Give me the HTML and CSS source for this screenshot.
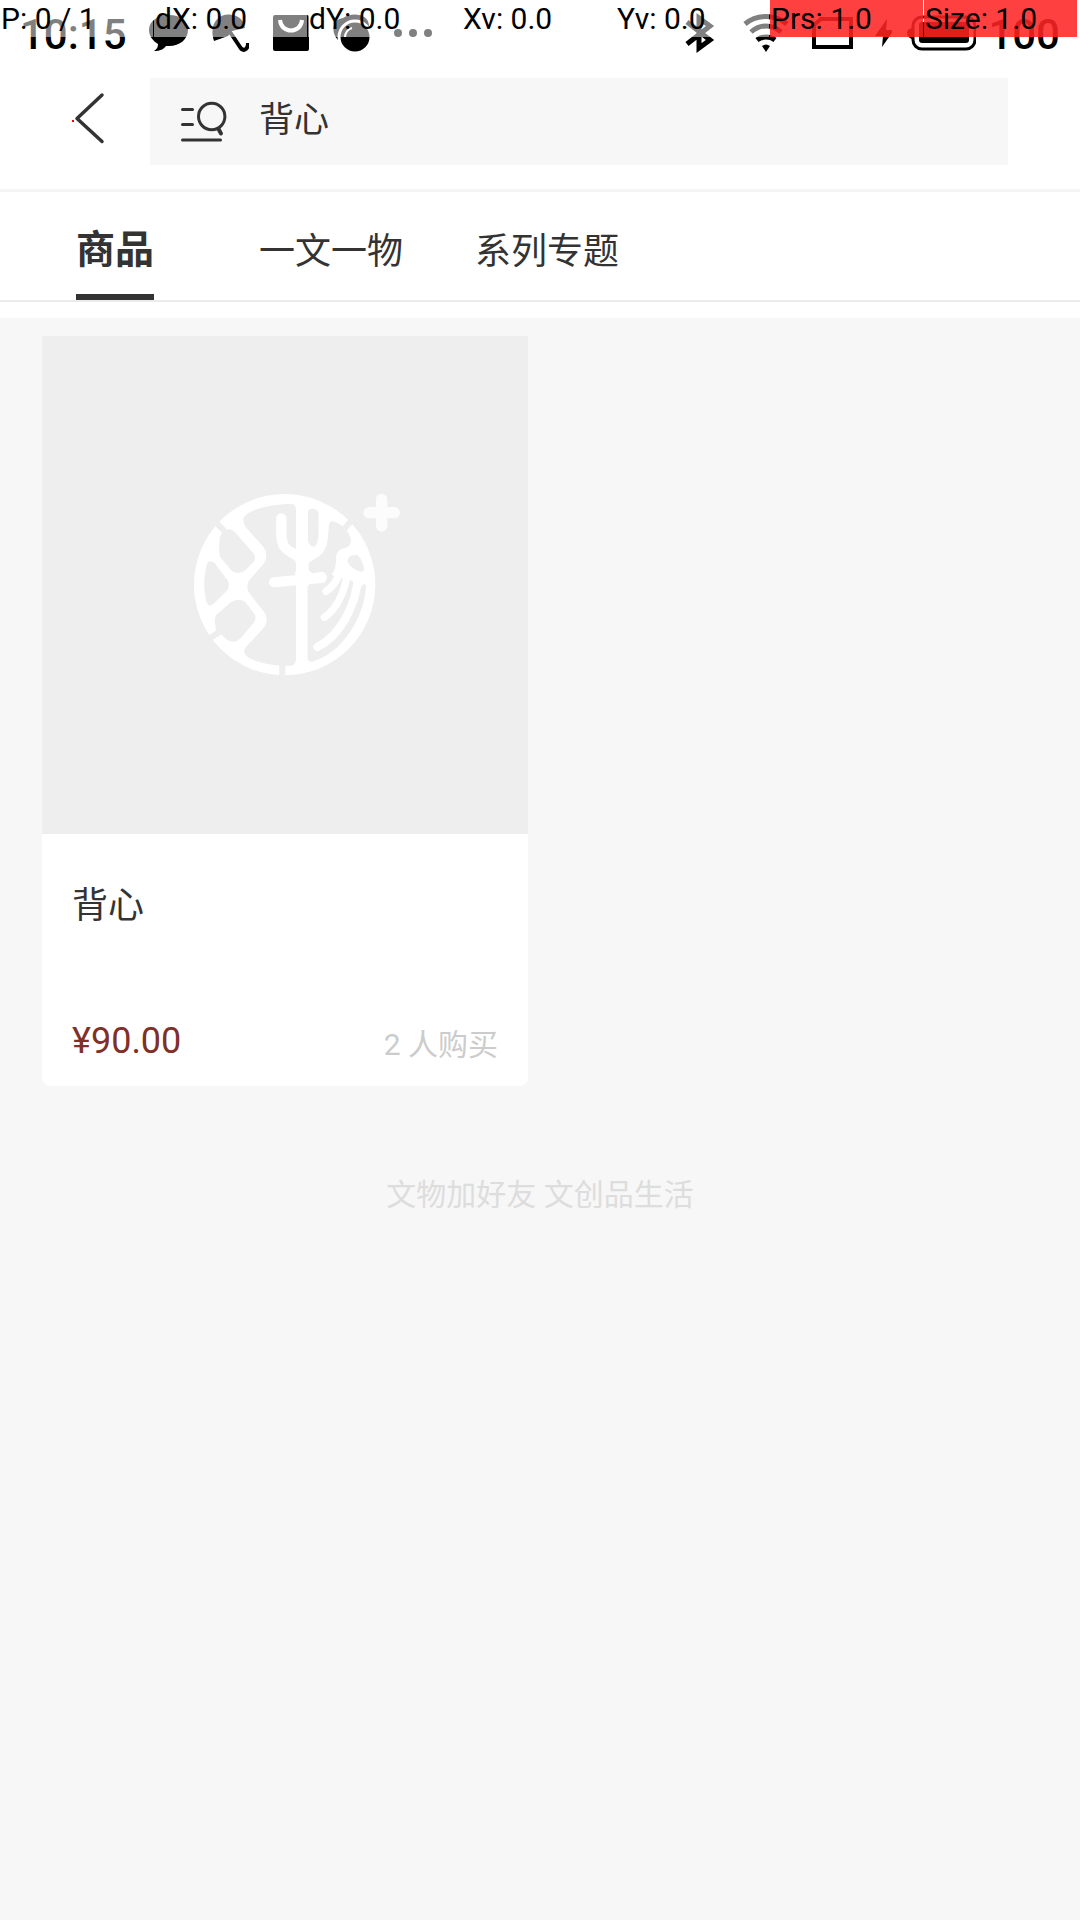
FILE: index.html
```html
<!DOCTYPE html>
<html lang="zh-CN">
<head>
<meta charset="utf-8">
<meta name="viewport" content="width=device-width, initial-scale=1">
<title>背心</title>
<link rel="stylesheet" href="styles.css">
</head>
<body>
<div class="status-bar">
  <div class="status-group">
    <span class="status-text">10:15</span>
    <svg width="40" height="40" viewBox="148 13 40 40"><path d="M169 15c11 0 19 6 19 15s-8 16-19 16h-3c-2 3-6 5-12 5 3-2 4-4 4-7-5-3-9-8-9-14 0-9 9-15 20-15z"/></svg>
    <svg width="40" height="40" viewBox="209 13 40 40"><path d="M214 41c-6-18 6-29 18-26 7 1 12 5 13 13l-13 3-4 5z"/><path d="M230 32l10 15c3 5 8 3 8-4" fill="none" stroke="#000" stroke-width="4"/></svg>
    <svg width="40" height="40" viewBox="270 13 40 40"><rect x="273" y="15" width="36" height="36" rx="2"/><path d="M280 20c1 14 21 14 22 0" fill="none" stroke="#fff" stroke-width="4"/></svg>
    <svg width="40" height="40" viewBox="331 13 40 40"><path d="M338 40c-8-8-5-21 5-22 8-6 26-5 26 8z"/><circle cx="355" cy="37" r="16" stroke="#fff" stroke-width="3"/><path d="M345 37c0-4 3-8 7-9" fill="none" stroke="#fff" stroke-width="2"/></svg>
    <svg width="40" height="40" viewBox="392 13 40 40"><circle cx="398" cy="33" r="4"/><circle cx="413" cy="33" r="4"/><circle cx="428" cy="33" r="4"/></svg>
  </div>
  <div class="status-group status-right">
    <svg width="40" height="40" viewBox="684 13 40 40"><path d="M687 22l23 18-11 8V18l11 8-23 18" fill="none" stroke="#000" stroke-width="5"/></svg>
    <svg width="60" height="40" viewBox="736 13 60 40"><path d="M745 24c12-10 30-10 42 0M751 32c9-8 21-8 30 0M757 40c5-4 13-4 18 0" fill="none" stroke="#000" stroke-width="5"/><path d="M762 46q4-3 8 0l-4 6z"/></svg>
    <svg width="48" height="40" viewBox="808 13 48 40"><path d="M814 25l7-6h30v28h-37z" fill="none" stroke="#000" stroke-width="4"/></svg>
    <svg width="24" height="40" viewBox="868 13 24 40"><path d="M887 19l-12 17h8l-1 11 12-17h-8z"/></svg>
    <svg width="72" height="40" viewBox="904 13 72 40"><rect x="913" y="17" width="62" height="32" rx="9" fill="none" stroke="#000" stroke-width="3"/><path d="M912 28q-5 1-5 5t5 6z"/><rect x="919" y="22" width="50" height="21" rx="3"/></svg>
    <span class="status-text">100</span>
  </div>
  <div class="pointer-bar">
    <span>P: 0 / 1</span><span>dX: 0.0</span><span>dY: 0.0</span><span>Xv: 0.0</span><span>Yv: 0.0</span><span class="hot">Prs: 1.0</span><span class="hot">Size: 1.0</span>
  </div>
</div>
<header class="header">
  <button class="back" type="button" aria-label="返回">
    <svg width="32" height="52" viewBox="74 92 32 52"><path d="M102 95L77 118.500l25 23" fill="none" stroke="#333" stroke-width="3.500" stroke-linecap="round" stroke-linejoin="round"/></svg>
    <i class="touch-dot"></i>
  </button>
  <label class="search">
    <svg width="48" height="42" viewBox="180 100 48 42" fill="none" stroke="#333" stroke-width="3" stroke-linecap="round"><path d="M182.500 108.500H192.500M182.500 123.500H192.500M182.500 139H220.500"/><circle cx="211.700" cy="115.500" r="13.200"/><path d="M218.500 128l2.500 4.500" stroke-width="4"/></svg>
    <input type="text" value="背心" aria-label="搜索">
  </label>
</header>
<nav class="tabs">
  <a class="tab active" href="#goods"><span>商品</span></a>
  <a class="tab" href="#articles"><span>一文一物</span></a>
  <a class="tab" href="#series"><span>系列专题</span></a>
</nav>
<main class="results">
  <article class="card">
    <div class="cover">
      <svg width="250" height="210" viewBox="-60 0 750 630">
        <circle cx="314" cy="314" r="272" fill="#fff"/>
        <g fill="#eee">
          <path d="M190 115C200 90 270 72 335 72Q348 74 348 90V540Q346 558 330 557L298 557C250 552 210 540 196 525Q186 510 203 495L250 445Q269 420 252 395L208 340Q196 320 208 300L250 253Q268 225 250 200L200 145Q188 130 190 115Z"/>
          <path d="M120 170Q128 150 150 148Q164 152 170 162L220 220Q231 234 220 247L196 271Q177 286 156 274L120 230Q114 212 120 170Z"/>
          <path d="M82 248Q93 238 104 250L142 300Q151 315 142 330L102 370Q88 384 80 368C70 330 70 285 82 248Z"/>
          <path d="M104 423Q104 404 120 395L152 367Q175 352 195 365L222 400Q232 415 220 430L182 475Q163 493 142 480L126 466L108 451Z"/>
          <path d="M384 96Q385 85 400 86Q416 88 416 105V150Q416 198 400 200Q384 198 384 178Z"/>
          <path d="M447 135Q450 122 460 124L480 133L498 150Q515 170 513 186Q508 203 485 207Q467 213 468 240Q468 265 455 285L558 315C555 415 480 525 395 545Q382 545 382 530V322Q385 308 410 308L440 296Q442 278 425 275L398 280Q384 272 382 260Q384 245 400 240Q440 220 443 180Z"/>
        </g>
        <g fill="none" stroke="#eee" stroke-width="18">
          <path d="M96 116L136 156M84 478L128 450M307 550V595M518 118L485 155"/>
        </g>
        <g fill="none" stroke="#fff" stroke-linecap="round" stroke-linejoin="round">
          <path d="M304 115V160C304 215 330 210 364 235" stroke-width="31"/>
          <path d="M282 307L425 294" stroke-width="30"/>
          <path d="M346 240Q358 260 346 282H384V240Z" fill="#fff" stroke-width="4"/>
          <path d="M365 80V562" stroke-width="34"/>
          <path d="M480 270C475 295 460 320 438 334M503 280C490 350 466 390 433 412" stroke-width="22"/>
          <path d="M535 285C528 385 475 470 412 501" stroke-width="25"/>
        </g>
        <path d="M472 285Q470 250 476 220Q500 195 525 198L560 250V320Q553 300 546 320L520 292L490 288Z" fill="#fff"/>
        <path d="M502 243Q505 224 532 224Q548 240 552 266Q552 275 542 275Q512 268 502 243Z" fill="#eee"/>
        <path d="M605 58V138M567 98H643" fill="none" stroke="#fcfcfc" stroke-width="34" stroke-linecap="round"/>
      </svg>
    </div>
    <h2 class="name">背心</h2>
    <div class="meta"><span class="price">¥90.00</span><span class="sold">2 人购买</span></div>
  </article>
  <p class="slogan">文物加好友 文创品生活</p>
</main>
</body>
</html>
```
FILE: styles.css
```css
* { box-sizing: border-box; }
body {
  margin: 0;
  min-height: 100vh;
  background: #f7f7f7;
  color: #333;
  font-family: Roboto, "Noto Sans CJK SC", sans-serif;
}
svg { display: block; flex: none; }

.status-bar {
  position: relative;
  display: flex;
  justify-content: space-between;
  height: 64px;
  padding: 13px 20px 0;
  background: #fff;
  color: #000;
}
.status-group { display: flex; gap: 21px; height: 40px; }
.status-right { gap: 12px; }
.status-text { font-size: 42px; line-height: 44px; font-weight: 500; }
.pointer-bar {
  position: absolute;
  inset: 0 0 auto;
  display: grid;
  grid-template-columns: repeat(7, 1fr);
  gap: 1px;
  padding-right: 3px;
  font-size: 30px;
  line-height: 37px;
  white-space: nowrap;
}
.pointer-bar span { padding-left: 1px; background: rgba(255, 255, 255, .5); }
.pointer-bar .hot { background: rgba(255, 36, 36, .87); }

.header {
  display: flex;
  padding: 14px 72px 24px 0;
  background: #fff;
  border-bottom: 3px solid #f5f5f5;
}
.back {
  position: relative;
  width: 150px;
  padding: 0 0 8px 74px;
  border: 0;
  background: none;
}
.touch-dot {
  position: absolute;
  left: 72px;
  top: 42px;
  width: 2px;
  height: 2px;
  background: #f00;
}
.search {
  flex: 1;
  display: flex;
  align-items: center;
  gap: 31px;
  height: 87px;
  padding: 0 30px;
  background: #f7f7f7;
}
.search input {
  flex: 1;
  min-width: 0;
  height: 87px;
  padding: 0 0 10px;
  border: 0;
  outline: 0;
  background: none;
  color: #333;
  font: inherit;
  font-size: 35px;
}

.tabs {
  display: flex;
  padding: 0 7px 16px;
  background: linear-gradient(#ebebeb, #ebebeb) 0 108px / 100% 2px no-repeat #fff;
}
.tab {
  display: flex;
  justify-content: center;
  width: 216px;
  height: 110px;
  padding-bottom: 2px;
  color: #333;
  font-size: 36px;
  line-height: 120px;
  text-decoration: none;
}
.active span {
  height: 108px;
  border-bottom: 6px solid #333;
  font-size: 39px;
  font-weight: 700;
  line-height: 116px;
}

.results { padding: 18px 42px; }
.card {
  width: calc(50% - 12px);
  max-width: 486px;
  overflow: hidden;
  background: #fff;
  border-radius: 0 0 8px 8px;
}
.cover {
  display: flex;
  align-items: center;
  justify-content: center;
  height: 498px;
  background: #eee;
}
.name {
  margin: 0;
  padding: 46px 30px 0;
  font-size: 36px;
  line-height: 52px;
  font-weight: 400;
}
.meta {
  display: flex;
  justify-content: space-between;
  align-items: flex-end;
  padding: 85px 30px 21px;
}
.price { color: #7f3029; font-size: 36px; line-height: 48px; }
.sold { color: #ccc; font-size: 30px; line-height: 40px; }
.slogan {
  margin: 89px 0 0;
  color: #ddd;
  font-size: 30px;
  line-height: 40px;
  text-align: center;
}
```
